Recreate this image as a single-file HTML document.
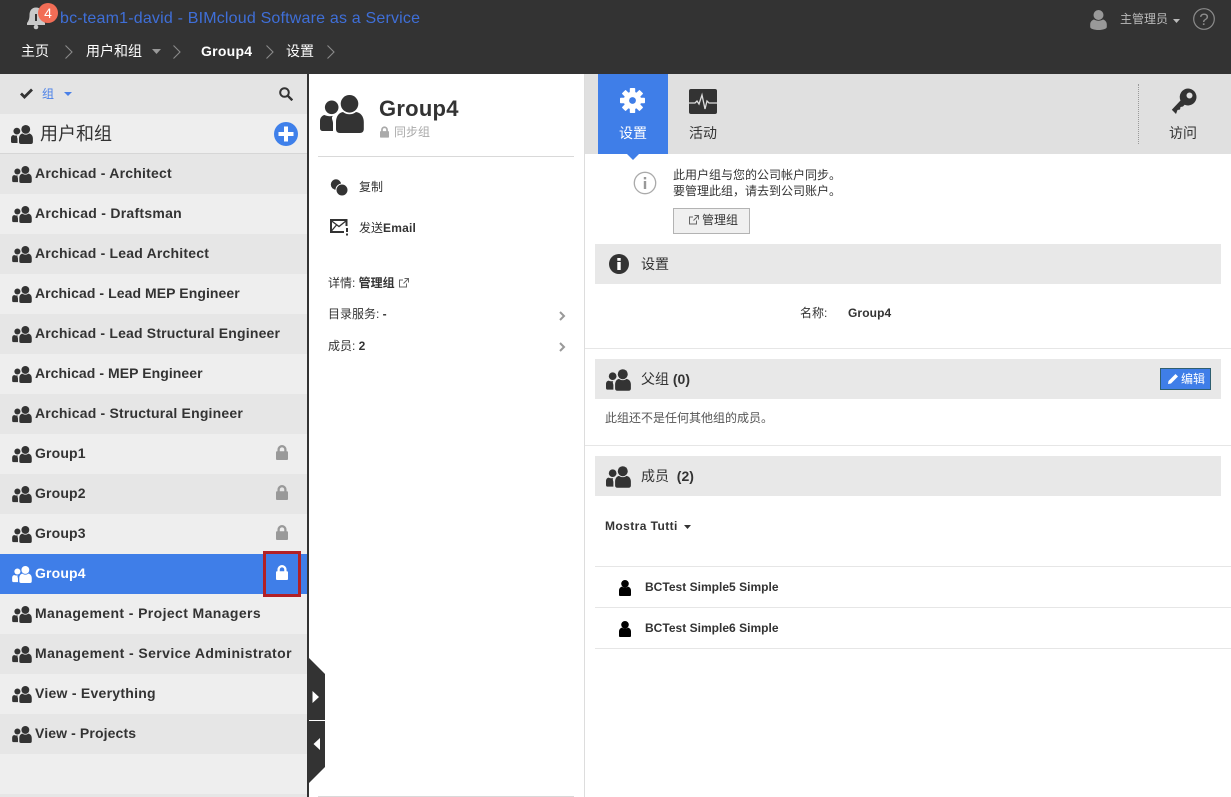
<!DOCTYPE html>
<html lang="zh"><head><meta charset="utf-8"><title>BIMcloud</title>
<style>
html,body{margin:0;padding:0;background:#fff}
#p{position:relative;width:1231px;height:797px;overflow:hidden;background:#fff;font-family:"Liberation Sans","Noto Sans CJK SC",sans-serif;color:#333}
#p div,#p span.a,#p svg{position:absolute}
.t{white-space:nowrap;line-height:20px;height:20px}
.b{font-weight:700}
.row{left:0;width:307px;height:40px}
.row .n{left:35px;top:9px;font-size:14px;font-weight:700;line-height:20px;white-space:nowrap;color:#333}
.row svg.u{left:12px;top:12px;width:20px;height:17px;color:#333}
.row svg.l{left:276px;top:11px;width:12px;height:15px;color:#999}
.d{background:#e6e6e6}.li{background:#eee}
.bar{left:595px;width:626px;height:40px;background:#e8e8e8}
.sep{height:1px;background:#e6e6e6}
</style></head><body>
<svg width="0" height="0" style="position:absolute"><defs>
<symbol id="users" viewBox="0 0 44 38"><circle cx="11.700" cy="12.300" r="6.800" fill="currentColor"/><circle cx="29.500" cy="8.800" r="8.800" fill="currentColor"/><path fill="currentColor" d="M16 27C16 21.500 19 17.500 23 17c2 1.500 4 2.300 6.500 2.300s4.500-.8 6.500-2.300c4.500.5 7.800 4.500 7.800 10v7c0 2.500-1.500 4-4 4H20c-2.500 0-4-1.500-4-4z"/><path fill="currentColor" d="M4.500 20c1.500.8 3.500 1.200 5.500 1.200.8 0 1.800-.1 2.800-.3C10.800 23.500 13 25 13 28v8H3c-2 0-3-1-3-3v-7c0-3 1.800-5.500 4.500-6z"/></symbol>
<symbol id="lock" viewBox="0 0 12 15"><path fill="none" stroke="currentColor" stroke-width="2.300" d="M2.600 7V4.600a3.400 3.400 0 0 1 6.800 0V7"/><rect x="0" y="6.300" width="12" height="8.700" rx="1" fill="currentColor"/></symbol>
<symbol id="ext" viewBox="0 0 10 10"><path fill="none" stroke="currentColor" stroke-width="1" d="M7.500 5.500v3.500h-7v-7h3.500M5.500.5h4v4M9.500.5l-5 5"/></symbol>
<symbol id="user" viewBox="0 0 12 16"><circle cx="6" cy="3.800" r="3.800" fill="currentColor"/><path fill="currentColor" d="M2.800 6.600c.9.6 2 1 3.200 1s2.300-.4 3.200-1C11 7.200 12 8.600 12 10.500V15c0 .6-.4 1-1 1H1c-.6 0-1-.4-1-1v-4.500c0-1.900 1-3.300 2.800-3.900z"/></symbol>
</defs></svg>
<div id="p">
<!-- header -->
<div style="left:0;top:0;width:1231px;height:74px;background:#333"></div>
<svg style="left:27px;top:6px" width="22" height="24" viewBox="0 0 22 24"><path fill="#c9c9c9" d="M9 1.500c4.500 0 6.500 3.500 6.500 7.500 0 4 1 6 2.500 8v2H0v-2c1.500-2 2.500-4 2.500-8 0-4 2-7.500 6.500-7.500z"/><circle cx="9" cy="21" r="2.300" fill="#c9c9c9"/><rect x="8" y="8" width="2" height="7" fill="#333"/></svg>
<div style="left:38px;top:3px;width:20px;height:20px;border-radius:50%;background:#f26d56;color:#fff;font-size:14px;line-height:20px;text-align:center">4</div>
<div class="t" style="left:60px;top:9px;font-size:16px;letter-spacing:.19px;color:#3f6fd8">bc-team1-david - BIMcloud Software as a Service</div>
<div class="t" style="left:21px;top:41px;font-size:14px;color:#fff">主页</div>
<svg style="left:64px;top:44px" width="10" height="16" fill="none" stroke="#8a8a8a" stroke-width="1.100"><path d="M1.500 1.500l6.500 6.500-6.500 6.500"/></svg>
<div class="t" style="left:86px;top:41px;font-size:14px;color:#fff">用户和组</div>
<svg style="left:152px;top:49px" width="9" height="5"><path fill="#999" d="M0 0h9L4.500 5z"/></svg>
<svg style="left:172px;top:44px" width="10" height="16" fill="none" stroke="#8a8a8a" stroke-width="1.100"><path d="M1.500 1.500l6.500 6.500-6.500 6.500"/></svg>
<div class="t b" style="left:201px;top:41px;font-size:14px;letter-spacing:.25px;color:#fff">Group4</div>
<svg style="left:265px;top:44px" width="10" height="16" fill="none" stroke="#8a8a8a" stroke-width="1.100"><path d="M1.500 1.500l6.500 6.500-6.500 6.500"/></svg>
<div class="t" style="left:286px;top:41px;font-size:14px;color:#fff">设置</div>
<svg style="left:326px;top:44px" width="10" height="16" fill="none" stroke="#8a8a8a" stroke-width="1.100"><path d="M1.500 1.500l6.500 6.500-6.500 6.500"/></svg>
<svg style="left:1090px;top:10px" width="17" height="20" viewBox="0 0 17 20"><circle cx="8.500" cy="5" r="5" fill="#999"/><path fill="#999" d="M4 9.500c1.300.8 2.800 1.200 4.500 1.200s3.200-.4 4.500-1.200c2.300.6 3.800 2.600 3.800 5V17c0 1.800-4 3-8.300 3S.2 18.800.2 17v-2.500c0-2.400 1.500-4.400 3.800-5z"/></svg>
<div class="t" style="left:1120px;top:9px;font-size:12px;color:#bbb">主管理员</div>
<svg style="left:1173px;top:19px" width="7" height="4"><path fill="#bbb" d="M0 0h7L3.500 4z"/></svg>
<svg style="left:1193px;top:8px" width="22" height="22"><circle cx="11" cy="11" r="10.300" fill="none" stroke="#8c8c8c" stroke-width="1.200"/><text x="11" y="17" font-family="Liberation Sans" font-size="17" fill="#8c8c8c" text-anchor="middle">?</text></svg>

<!-- sidebar -->
<div style="left:0;top:74px;width:307px;height:723px;background:#eee"></div>
<div style="left:0;top:74px;width:307px;height:40px;background:#e4e4e4"></div>
<div style="left:0;top:153px;width:307px;height:1px;background:#d6d6d6"></div>
<div style="left:0;top:794px;width:307px;height:3px;background:#e6e6e6"></div>
<div style="left:307px;top:74px;width:2px;height:723px;background:#333"></div>
<svg style="left:20px;top:88px" width="13" height="11" fill="none" stroke="#333" stroke-width="2.800"><path d="M1 5.500l3.500 3.500L12 1.500"/></svg>
<div class="t" style="left:42px;top:84px;font-size:12px;color:#4a80e8">组</div>
<svg style="left:64px;top:92px" width="8" height="4"><path fill="#4a80e8" d="M0 0h8L4 4z"/></svg>
<svg style="left:279px;top:87px" width="14" height="14" fill="none" stroke="#333" stroke-width="2"><circle cx="5.500" cy="5.500" r="4.300"/><path stroke-width="2.400" d="M8.800 8.800l4.500 4.500"/></svg>
<svg style="left:11px;top:125px;color:#333" width="22" height="19"><use href="#users"/></svg>
<div class="t" style="left:40px;top:124px;font-size:18px;color:#333">用户和组</div>
<svg style="left:274px;top:122px" width="24" height="24"><circle cx="12" cy="12" r="12" fill="#3f80ea"/><path fill="#fff" d="M10 4.500h4V10h5.500v4H14v5.500h-4V14H4.500v-4H10z"/></svg>

<div class="row d" style="top:154px"><svg class="u"><use href="#users"/></svg><span class="a n" style="letter-spacing:.22px">Archicad - Architect</span></div>
<div class="row li" style="top:194px"><svg class="u"><use href="#users"/></svg><span class="a n" style="letter-spacing:.27px">Archicad - Draftsman</span></div>
<div class="row d" style="top:234px"><svg class="u"><use href="#users"/></svg><span class="a n" style="letter-spacing:.2px">Archicad - Lead Architect</span></div>
<div class="row li" style="top:274px"><svg class="u"><use href="#users"/></svg><span class="a n" style="letter-spacing:.07px">Archicad - Lead MEP Engineer</span></div>
<div class="row d" style="top:314px"><svg class="u"><use href="#users"/></svg><span class="a n" style="letter-spacing:.18px">Archicad - Lead Structural Engineer</span></div>
<div class="row li" style="top:354px"><svg class="u"><use href="#users"/></svg><span class="a n" style="letter-spacing:.06px">Archicad - MEP Engineer</span></div>
<div class="row d" style="top:394px"><svg class="u"><use href="#users"/></svg><span class="a n" style="letter-spacing:.19px">Archicad - Structural Engineer</span></div>
<div class="row li" style="top:434px"><svg class="u"><use href="#users"/></svg><span class="a n" style="letter-spacing:.15px">Group1</span><svg class="l"><use href="#lock"/></svg></div>
<div class="row d" style="top:474px"><svg class="u"><use href="#users"/></svg><span class="a n" style="letter-spacing:.15px">Group2</span><svg class="l"><use href="#lock"/></svg></div>
<div class="row li" style="top:514px"><svg class="u"><use href="#users"/></svg><span class="a n" style="letter-spacing:.15px">Group3</span><svg class="l"><use href="#lock"/></svg></div>
<div class="row" style="top:554px;background:#3f7ee8"><svg class="u" style="color:#fff"><use href="#users"/></svg><span class="a n" style="color:#fff;letter-spacing:.15px">Group4</span><svg class="l" style="color:#fff"><use href="#lock"/></svg></div>
<div class="row li" style="top:594px"><svg class="u"><use href="#users"/></svg><span class="a n" style="letter-spacing:.39px">Management - Project Managers</span></div>
<div class="row d" style="top:634px"><svg class="u"><use href="#users"/></svg><span class="a n" style="letter-spacing:.41px">Management - Service Administrator</span></div>
<div class="row li" style="top:674px"><svg class="u"><use href="#users"/></svg><span class="a n" style="letter-spacing:.26px">View - Everything</span></div>
<div class="row d" style="top:714px"><svg class="u"><use href="#users"/></svg><span class="a n" style="letter-spacing:.12px">View - Projects</span></div>
<div style="left:263px;top:551px;width:32px;height:40px;border:3px solid #b22025"></div>

<!-- collapse tabs -->
<svg style="left:309px;top:658px" width="16" height="125" viewBox="0 0 16 125"><path fill="#333" d="M0 0l16 16v93L0 125z"/><rect y="62" width="16" height="1" fill="#fff"/><path fill="#fff" d="M3.500 33l6.500 6-6.500 6zM11 80v12l-6.500-6z"/></svg>

<!-- middle -->
<div style="left:584px;top:74px;width:1px;height:723px;background:#ddd"></div>
<svg style="left:320px;top:95px;color:#333" width="44" height="38"><use href="#users"/></svg>
<div class="t b" style="left:379px;top:97px;font-size:22px;line-height:24px;height:24px;letter-spacing:.25px;color:#333">Group4</div>
<svg style="left:380px;top:126px;color:#aaa" width="9" height="12"><use href="#lock"/></svg>
<div class="t" style="left:394px;top:122px;font-size:12px;color:#aaa">同步组</div>
<div style="left:318px;top:156px;width:256px;height:1px;background:#d9d9d9"></div>
<svg style="left:330px;top:179px" width="19" height="18"><circle cx="6" cy="5.500" r="5.200" fill="#333"/><circle cx="12" cy="11" r="6" fill="#333" stroke="#fff" stroke-width="1"/></svg>
<div class="t" style="left:359px;top:177px;font-size:12px;color:#333">复制</div>
<svg style="left:330px;top:219px" width="19" height="17" fill="none" stroke="#333"><path stroke-width="2" d="M16.500 7V1H1v12h13"/><path stroke-width="1.300" d="M1 1.500l8 6 7.500-6M1 12.500l5.500-6.500"/><path stroke-width="2" d="M17 9v4M17 14.500v2"/></svg>
<div class="t" style="left:359px;top:218px;font-size:12px;color:#333">发送<b style="letter-spacing:.2px">Email</b></div>
<div class="t" style="left:328px;top:273px;font-size:12px;color:#333">详情: <b>管理组</b></div>
<svg style="left:399px;top:278px;color:#666" width="10" height="10"><use href="#ext"/></svg>
<div class="t" style="left:328px;top:304px;font-size:12px;color:#333">目录服务: <b>-</b></div>
<div class="t" style="left:328px;top:336px;font-size:12px;color:#333">成员: <b>2</b></div>
<svg style="left:559px;top:311px" width="7" height="10" fill="none" stroke="#999" stroke-width="2"><path d="M1 1l4 4-4 4"/></svg>
<svg style="left:559px;top:342px" width="7" height="10" fill="none" stroke="#999" stroke-width="2"><path d="M1 1l4 4-4 4"/></svg>
<div style="left:318px;top:796px;width:256px;height:1px;background:#d9d9d9"></div>

<!-- right top -->
<div style="left:585px;top:74px;width:646px;height:80px;background:#e0e0e0"></div>
<div style="left:598px;top:74px;width:70px;height:80px;background:#3f7ee8"></div>
<svg style="left:627px;top:154px" width="12" height="6"><path fill="#3f7ee8" d="M0 0h12L6 6z"/></svg>
<svg style="left:620px;top:88px" width="25" height="25" viewBox="0 0 25 25"><g fill="#fff"><circle cx="12.500" cy="12.500" r="8.800"/><rect x="9.800" y="0" width="5.400" height="25" rx=".8"/><rect x="9.800" y="0" width="5.400" height="25" rx=".8" transform="rotate(45 12.500 12.500)"/><rect x="9.800" y="0" width="5.400" height="25" rx=".8" transform="rotate(90 12.500 12.500)"/><rect x="9.800" y="0" width="5.400" height="25" rx=".8" transform="rotate(135 12.500 12.500)"/></g><circle cx="12.500" cy="12.500" r="3.400" fill="#3f7ee8"/></svg>
<div class="t" style="left:619px;top:123px;font-size:14px;color:#fff">设置</div>
<svg style="left:689px;top:89px" width="28" height="25" viewBox="0 0 28 25"><rect width="28" height="25" rx="2" fill="#333"/><path d="M0 14h6l2-2 2 3 3-9 3 14 2-8 2 2h8" fill="none" stroke="#ddd" stroke-width="1.300"/></svg>
<div class="t" style="left:689px;top:123px;font-size:14px;color:#333">活动</div>
<div style="left:1138px;top:84px;width:0;height:60px;border-left:1px dotted #999"></div>
<svg style="left:1171px;top:88px" width="26" height="27" viewBox="0 0 26 27"><path fill="#333" fill-rule="evenodd" d="M17 0.500a8.500 8.500 0 1 1-3.400 16.300L12 18.500l-2.500.5-.5 2.500-2.500.5L5 26 .8 21.800 9.500 12.500A8.500 8.500 0 0 1 17 .5zm1.500 4a3 3 0 1 0 0 6 3 3 0 0 0 0-6z"/></svg>
<div class="t" style="left:1169px;top:123px;font-size:14px;color:#333">访问</div>

<!-- notice -->
<svg style="left:633px;top:171px" width="24" height="24"><circle cx="12" cy="12" r="10.700" fill="none" stroke="#aaa" stroke-width="1.300"/><rect x="10.800" y="10" width="2.400" height="8" fill="#999"/><rect x="10.800" y="6" width="2.400" height="2.400" fill="#999"/></svg>
<div class="t" style="left:673px;top:165px;font-size:12px;color:#333">此用户组与您的公司帐户同步。</div>
<div class="t" style="left:673px;top:181px;font-size:12px;color:#333">要管理此组，请去到公司账户。</div>
<div style="left:673px;top:208px;width:75px;height:24px;border:1px solid #b3b3b3;background:#f0f0f0"></div>
<svg style="left:689px;top:215px;color:#666" width="10" height="10"><use href="#ext"/></svg>
<div class="t" style="left:702px;top:210px;font-size:12px;color:#333">管理组</div>

<!-- section settings -->
<div class="bar" style="top:244px"></div>
<svg style="left:609px;top:254px" width="20" height="20"><circle cx="10" cy="10" r="10" fill="#333"/><rect x="8.300" y="8" width="3.400" height="8" fill="#fff"/><rect x="8.300" y="4" width="3.400" height="2.800" fill="#fff"/></svg>
<div class="t" style="left:641px;top:254px;font-size:14px;color:#333">设置</div>
<div class="t" style="left:800px;top:303px;font-size:12px;color:#333">名称:</div>
<div class="t b" style="left:848px;top:303px;font-size:12px;letter-spacing:.1px;color:#333">Group4</div>
<div class="sep" style="left:585px;top:348px;width:646px"></div>

<!-- parent -->
<div class="bar" style="top:359px"></div>
<svg style="left:606px;top:369px;color:#333" width="25" height="22"><use href="#users"/></svg>
<div class="t" style="left:641px;top:369px;font-size:14px;color:#333">父组 <b>(0)</b></div>
<div style="left:1160px;top:368px;width:49px;height:20px;border:1px solid #2f5f70;background:#3f7ee8"></div>
<svg style="left:1168px;top:374px" width="10" height="10"><path fill="#fff" d="M7.500 0L10 2.500 3 9.500 0 10l.5-3z"/></svg>
<div class="t" style="left:1181px;top:369px;font-size:12px;color:#fff">编辑</div>
<div class="t" style="left:605px;top:408px;font-size:12px;color:#555">此组还不是任何其他组的成员。</div>
<div class="sep" style="left:585px;top:445px;width:646px"></div>

<!-- members -->
<div class="bar" style="top:456px"></div>
<svg style="left:606px;top:466px;color:#333" width="25" height="22"><use href="#users"/></svg>
<div class="t" style="left:641px;top:466px;font-size:14px;color:#333">成员&nbsp; <b>(2)</b></div>
<div class="t b" style="left:605px;top:516px;font-size:12px;letter-spacing:.42px;color:#333">Mostra Tutti</div>
<svg style="left:684px;top:525px" width="7" height="4"><path fill="#333" d="M0 0h7L3.500 4z"/></svg>
<div class="sep" style="left:595px;top:566px;width:636px"></div>
<svg style="left:619px;top:580px;color:#000" width="12" height="16"><use href="#user"/></svg>
<div class="t b" style="left:645px;top:577px;font-size:12px;letter-spacing:.02px;color:#333">BCTest Simple5 Simple</div>
<div class="sep" style="left:595px;top:607px;width:636px"></div>
<svg style="left:619px;top:621px;color:#000" width="12" height="16"><use href="#user"/></svg>
<div class="t b" style="left:645px;top:618px;font-size:12px;letter-spacing:.02px;color:#333">BCTest Simple6 Simple</div>
<div class="sep" style="left:595px;top:648px;width:636px"></div>
</div>
</body></html>
